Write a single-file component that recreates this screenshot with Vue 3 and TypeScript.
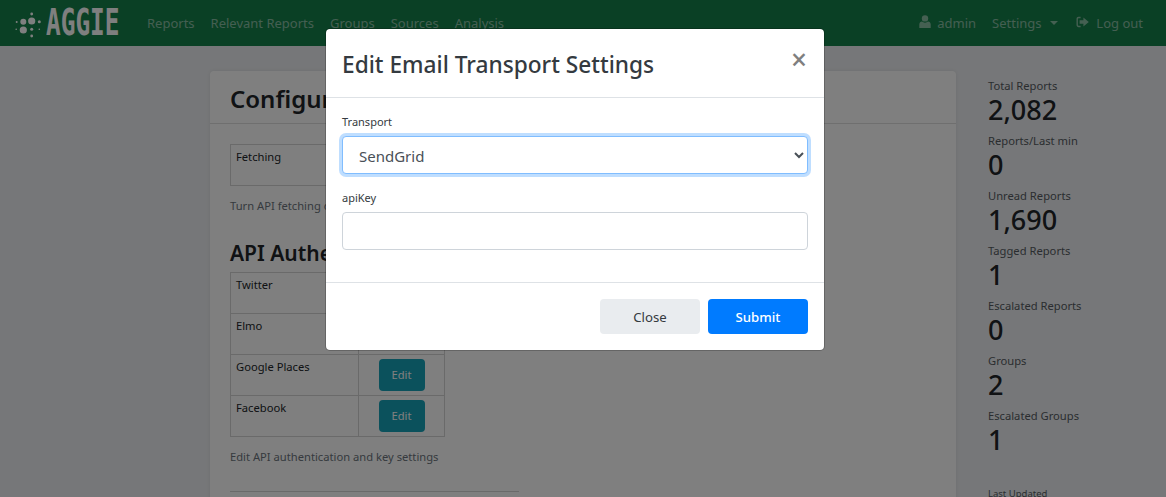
<template>
  <div class="page">
    <nav class="navbar">
      <a class="brand">
        <svg class="brand-dots" width="26" height="30" viewBox="0 0 26 30">
          <circle cx="16.7" cy="6" r="1.4" />
          <circle cx="1.7" cy="14" r="1" />
          <circle cx="8.3" cy="13.7" r="3" />
          <circle cx="16.7" cy="13" r="3.6" />
          <circle cx="24.3" cy="13.7" r="1.5" />
          <circle cx="8.3" cy="22" r="3.6" />
          <circle cx="16.7" cy="21.3" r="1.5" />
          <circle cx="1.2" cy="21.3" r="0.8" />
          <circle cx="24.3" cy="21.3" r="0.8" />
          <circle cx="16.7" cy="28" r="1.4" />
        </svg>
        <span class="brand-name">AGGIE</span>
      </a>
      <ul class="nav-list">
        <li v-for="link in mainLinks" :key="link">{{ link }}</li>
      </ul>
      <ul class="nav-list nav-right">
        <li>
          <svg class="nav-icon" width="12" height="13" viewBox="0 0 12 13">
            <circle cx="6" cy="3.4" r="3.2" />
            <path d="M0.3 13V9.6C0.3 7.9 1.6 6.6 3 6.6C3.8 7.3 4.8 7.7 6 7.7C7.2 7.7 8.2 7.3 9 6.6C10.4 6.6 11.7 7.9 11.7 9.6V13Z" />
          </svg>
          admin
        </li>
        <li>Settings <span class="caret"></span></li>
        <li>
          <svg class="nav-icon logout-icon" width="13" height="12" viewBox="0 0 13 12">
            <path d="M4.6 0.8H2.6C1.4 0.8 0.5 1.7 0.5 2.9V9.1C0.5 10.3 1.4 11.2 2.6 11.2H4.6V9.8H2.7C2.2 9.8 1.9 9.5 1.9 9V3C1.9 2.5 2.2 2.2 2.7 2.2H4.6Z" />
            <path d="M7.4 1.6L12.8 6L7.4 10.4V7.8H3.6V4.2H7.4Z" />
          </svg>
          Log out
        </li>
      </ul>
    </nav>

    <main class="content">
      <section class="card">
        <h2 class="card-title">Configuration</h2>
        <div class="card-body">
          <table class="config-table">
            <tr>
              <td>Fetching</td>
              <td></td>
            </tr>
          </table>
          <p class="hint">Turn API fetching on or off</p>
          <h3 class="section-title">API Authentication</h3>
          <table class="config-table">
            <tr v-for="source in authSources" :key="source">
              <td>{{ source }}</td>
              <td class="action-cell"><button class="edit-btn" type="button">Edit</button></td>
            </tr>
          </table>
          <p class="hint">Edit API authentication and key settings</p>
          <hr class="divider" />
        </div>
      </section>

      <aside class="stats">
        <div v-for="stat in stats" :key="stat.label" class="stat">
          <div class="stat-label">{{ stat.label }}</div>
          <div class="stat-value">{{ stat.value }}</div>
        </div>
        <div class="last-updated">Last Updated</div>
      </aside>
    </main>

    <div class="backdrop">
      <div class="modal">
        <header class="modal-header">
          <h4 class="modal-title">Edit Email Transport Settings</h4>
          <span class="modal-close">&times;</span>
        </header>
        <div class="modal-body">
          <label class="field-label">Transport</label>
          <select class="field-input field-focus">
            <option>SendGrid</option>
            <option>SMTP</option>
          </select>
          <label class="field-label">apiKey</label>
          <input class="field-input" type="text" />
        </div>
        <footer class="modal-footer">
          <button class="btn btn-close" type="button">Close</button>
          <button class="btn btn-submit" type="button">Submit</button>
        </footer>
      </div>
    </div>
  </div>
</template>

<script setup lang="ts">
const mainLinks = ['Reports', 'Relevant Reports', 'Groups', 'Sources', 'Analysis']
const authSources = ['Twitter', 'Elmo', 'Google Places', 'Facebook']

const stats = [
  { label: 'Total Reports', value: '2,082' },
  { label: 'Reports/Last min', value: '0' },
  { label: 'Unread Reports', value: '1,690' },
  { label: 'Tagged Reports', value: '1' },
  { label: 'Escalated Reports', value: '0' },
  { label: 'Groups', value: '2' },
  { label: 'Escalated Groups', value: '1' },
]
</script>

<style>
html,
body {
  margin: 0;
  overflow: hidden;
}
</style>

<style scoped>
.page {
  position: relative;
  height: 497px;
  overflow: hidden;
  background: #edeff2;
  color: #212529;
  font-family: 'Noto Sans', 'Open Sans', sans-serif;
  font-size: 11.2px;
}

.navbar {
  display: flex;
  align-items: center;
  height: 46px;
  padding: 0 23px 0 15px;
  background: #14804a;
  box-sizing: border-box;
}

.brand {
  display: flex;
  align-items: center;
  width: 132px;
  color: #fff;
}

.brand-dots {
  fill: #fff;
  flex: none;
}

.brand-name {
  display: inline-block;
  margin-left: 5px;
  font-family: 'DejaVu Sans Mono', monospace;
  font-size: 37px;
  font-weight: 700;
  line-height: 30px;
  transform: scaleX(0.66);
  transform-origin: left center;
}

.nav-list {
  display: flex;
  gap: 16px;
  margin: 0;
  padding: 0;
  list-style: none;
  font-size: 13px;
  color: rgba(255, 255, 255, 0.5);
}

.nav-right {
  margin-left: auto;
}

.nav-icon {
  fill: rgba(255, 255, 255, 0.5);
  margin-right: 3px;
}

.logout-icon {
  margin-right: 4px;
}

.caret {
  display: inline-block;
  margin: 0 2px 0 5px;
  vertical-align: 3px;
  border-top: 4px solid;
  border-left: 4px solid transparent;
  border-right: 4px solid transparent;
}

.content {
  display: flex;
  align-items: flex-start;
  padding: 25px 0 0 210px;
}

.card {
  width: 746px;
  flex: none;
  background: #fff;
  border-radius: 4px;
  box-shadow: 0 0 4px rgba(0, 0, 0, 0.08);
}

.card-title {
  margin: 0;
  padding: 12px 20px 8px;
  height: 53px;
  box-sizing: border-box;
  border-bottom: 1px solid #dfdfdf;
  font-size: 24px;
  line-height: 32px;
  font-weight: 600;
}

.card-body {
  padding: 20px;
}

.config-table {
  border-collapse: collapse;
  table-layout: fixed;
  width: 215px;
}

.config-table td {
  height: 41px;
  padding: 3px 5px;
  box-sizing: border-box;
  border: 1px solid #d4d4d4;
  vertical-align: top;
  line-height: 18px;
}

.config-table td:first-child {
  width: 128px;
}

.action-cell {
  text-align: center;
}

.config-table td.action-cell {
  padding-top: 4px;
}

.edit-btn {
  width: 46px;
  height: 32px;
  padding: 0;
  border: 0;
  border-radius: 4px;
  background: #17a2b8;
  color: #fff;
  font: inherit;
}

.hint {
  margin: 11px 0 0;
  line-height: 18px;
  color: #6c757d;
}

.section-title {
  margin: 25px 0 5px;
  font-size: 21px;
  line-height: 27px;
  font-weight: 600;
}

.divider {
  width: 289px;
  margin: 25px 0 0;
  border: 0;
  border-top: 1px solid #d4d4d4;
}

.stats {
  margin-left: 32px;
  padding-top: 7px;
  color: #212529;
}

.stat {
  height: 55px;
}

.stat-label {
  line-height: 16px;
  color: #555b61;
}

.stat-value {
  font-size: 27px;
  line-height: 32px;
  font-weight: 500;
}

.last-updated {
  margin-top: 24px;
  font-size: 9.5px;
  color: #555b61;
}

.backdrop {
  position: absolute;
  inset: 0;
  display: flex;
  justify-content: center;
  align-items: flex-start;
  padding: 28px 16px 0 0;
  background: rgba(0, 0, 0, 0.5);
}

.modal {
  width: 500px;
  box-sizing: border-box;
  background: #fff;
  border: 1px solid rgba(0, 0, 0, 0.2);
  border-radius: 5px;
  background-clip: padding-box;
}

.modal-header {
  display: flex;
  justify-content: space-between;
  align-items: flex-start;
  height: 69px;
  box-sizing: border-box;
  padding: 17px 17px 0 16px;
  border-bottom: 1px solid #dee2e6;
}

.modal-title {
  margin: 0;
  font-size: 22.7px;
  line-height: 38px;
  font-weight: 500;
  color: #343a40;
}

.modal-close {
  margin-top: -1px;
  font-size: 28px;
  line-height: 28px;
  font-weight: 500;
  color: #7f7f7f;
}

.modal-body {
  display: flex;
  flex-direction: column;
  height: 184px;
  box-sizing: border-box;
  padding: 16px 16px 0;
}

.field-label {
  margin-bottom: 6px;
  line-height: 16px;
  font-size: 11px;
  color: #343a40;
}

.field-input {
  width: 100%;
  height: 38px;
  flex: none;
  box-sizing: border-box;
  margin-bottom: 16px;
  border: 1px solid #ced4da;
  border-radius: 4px;
  background: #fff;
  color: #495057;
  font: inherit;
  font-size: 15px;
  outline: none;
}

.field-focus {
  border-color: #80bdff;
  box-shadow: 0 0 0 3px rgba(0, 123, 255, 0.25);
  padding: 1px 0 0 12px;
}

.modal-footer {
  display: flex;
  justify-content: flex-end;
  gap: 8px;
  padding: 16px;
  border-top: 1px solid #dee2e6;
}

.btn {
  width: 100px;
  height: 35px;
  border: 0;
  border-radius: 4px;
  font: inherit;
  font-size: 13.2px;
}

.btn-close {
  background: #e9ecef;
  color: #343a40;
}

.btn-submit {
  background: #007bff;
  color: #fff;
  font-weight: 500;
}
</style>
